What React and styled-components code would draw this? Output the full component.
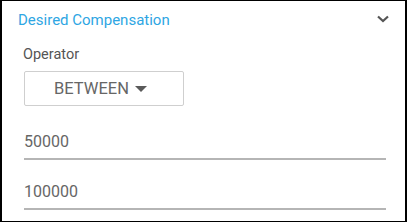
import React from "react";
import styled, { createGlobalStyle } from "styled-components";

const Global = createGlobalStyle`
  html, body { margin: 0; padding: 0; background: #fff; }
  body { font-family: Roboto, "Liberation Sans", Arial, sans-serif; }
`;

const Panel = styled.section`
  box-sizing: border-box;
  width: 407px;
  height: 222px;
  border-style: solid;
  border-color: #000;
  border-width: 1px 2px 1px 2px;
  background: #fff;
  display: flex;
  flex-direction: column;
`;

const Header = styled.header`
  display: flex;
  align-items: center;
  justify-content: space-between;
  height: 36px;
  padding: 0 15px 0 16px;
  box-sizing: border-box;
`;

const Title = styled.h3`
  margin: 0;
  font-size: 15px;
  font-weight: 400;
  color: #2ea6e3;
  line-height: 36px;
  position: relative;
  top: 1px;
`;

const Chevron = styled.svg`
  width: 14px;
  height: 14px;
  display: block;
`;

const Body = styled.div`
  display: flex;
  flex-direction: column;
  padding: 9px 19px 0 20px;
`;

const Label = styled.label`
  font-size: 14.5px;
  color: #555;
  line-height: 17px;
  margin-left: 1px;
`;

const DropButton = styled.button`
  box-sizing: border-box;
  margin-top: 8px;
  width: 160px;
  height: 35px;
  border: 1px solid #cfcfcf;
  border-radius: 2px;
  background: #fff;
  display: flex;
  align-items: center;
  justify-content: center;
  gap: 6px;
  font-family: inherit;
  font-size: 16.5px;
  color: #666;
  padding: 0 7px 0 0;
  margin-left: 2px;
`;

const Caret = styled.span`
  width: 0;
  height: 0;
  border-left: 6px solid transparent;
  border-right: 6px solid transparent;
  border-top: 6px solid #5a5a5a;
  display: inline-block;
`;

const Field = styled.div`
  margin-top: ${(p) => p.$top}px;
  margin-left: 2px;
  border-bottom: 2px solid #b5b5b5;
  height: 34px;
  box-sizing: border-box;
  display: flex;
  align-items: flex-end;
  padding-bottom: 8px;
  font-size: 16px;
  color: #666;
  line-height: 16px;
`;

export default function App() {
  return (
    <>
      <Global />
      <Panel>
        <Header>
          <Title>Desired Compensation</Title>
          <Chevron viewBox="0 0 14 14">
            <path d="M2 4.5 L7 9 L12 4.5" fill="none" stroke="#555" strokeWidth="2.2" />
          </Chevron>
        </Header>
        <Body>
          <Label>Operator</Label>
          <DropButton>
            BETWEEN <Caret />
          </DropButton>
          <Field $top={20}>50000</Field>
          <Field $top={16}>100000</Field>
        </Body>
      </Panel>
    </>
  );
}
